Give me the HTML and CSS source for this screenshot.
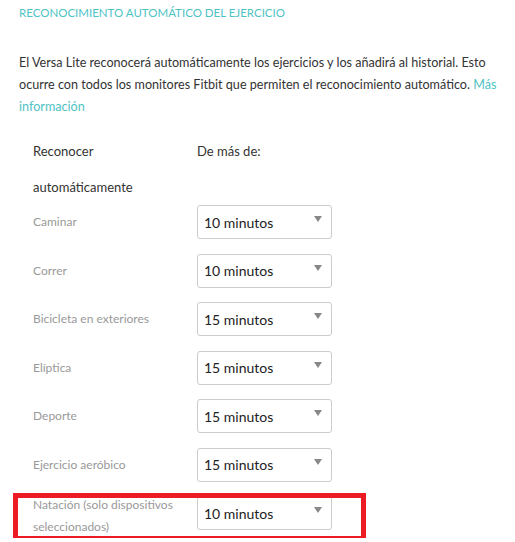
FILE: index.html
```html
<!DOCTYPE html>
<html lang="es">
<head>
<meta charset="utf-8">
<link rel="stylesheet" href="styles.css">
</head>
<body>
<div class="page">
  <h2 class="title">RECONOCIMIENTO AUTOMÁTICO DEL EJERCICIO</h2>
  <p class="intro">El Versa Lite reconocerá automáticamente los ejercicios y los añadirá al historial. Esto ocurre con todos los monitores Fitbit que permiten el reconocimiento automático. <a class="link" href="#">Más información</a></p>
  <div class="table">
    <div class="head-row">
      <div class="head-label">Reconocer<br>automáticamente</div>
      <div class="head-value">De más de:</div>
    </div>
    <div class="row"><div class="label">Caminar</div><div class="select"><span>10 minutos</span><i class="arrow"></i></div></div>
    <div class="row"><div class="label">Correr</div><div class="select"><span>10 minutos</span><i class="arrow"></i></div></div>
    <div class="row"><div class="label">Bicicleta en exteriores</div><div class="select"><span>15 minutos</span><i class="arrow"></i></div></div>
    <div class="row"><div class="label">Elíptica</div><div class="select"><span>15 minutos</span><i class="arrow"></i></div></div>
    <div class="row"><div class="label">Deporte</div><div class="select"><span>15 minutos</span><i class="arrow"></i></div></div>
    <div class="row"><div class="label">Ejercicio aeróbico</div><div class="select"><span>15 minutos</span><i class="arrow"></i></div></div>
    <div class="row highlight"><div class="label two">Natación (solo dispositivos seleccionados)</div><div class="select"><span>10 minutos</span><i class="arrow"></i></div></div>
  </div>
</div>
</body>
</html>
```

FILE: styles.css
```css
*, *::before, *::after { box-sizing: border-box; }
html, body { margin: 0; padding: 0; background: #fff; }
body { font-family: "Lato", "Open Sans", sans-serif; color: #333; }
.page { padding: 6px 0 0 19px; width: 515px; }
.title {
  margin: 0;
  font-size: 11.5px;
  font-weight: 400;
  color: #4ec3c4;
  line-height: 14px;
}
.intro {
  margin: 32px 0 0 0;
  width: 482px;
  font-size: 12.6px;
  line-height: 22px;
  color: #333;
}
.link { color: #4ec3c4; text-decoration: none; }
.table { margin-top: 15px; padding-left: 14px; }
.head-row { display: grid; grid-template-columns: 164px 1fr; font-size: 13px; line-height: 36px; color: #333; }
.row {
  display: grid;
  grid-template-columns: 164px 135px;
  align-items: center;
  margin-top: 14.5px;
  position: relative;
}
.head-row + .row { margin-top: 0; }
.label { font-size: 12px; color: #999; line-height: 22px; }
.label.two { width: 150px; }
.select {
  height: 34px;
  border: 1px solid #ccc;
  border-radius: 3px;
  display: flex;
  align-items: center;
  justify-content: space-between;
  padding: 0 9px 0 6px;
  font-size: 14px;
  color: #222;
}
.arrow {
  width: 0; height: 0;
  border-left: 4px solid transparent;
  border-right: 4px solid transparent;
  border-top: 6px solid #888;
  margin-top: -6px;
}
.highlight { align-items: start; }
.highlight .label { margin-top: -2.5px; }
.highlight::before {
  content: "";
  position: absolute;
  left: -20px; top: -3px;
  width: 353px; height: 48px;
  border: 5px solid #ed1c24;
}
```
